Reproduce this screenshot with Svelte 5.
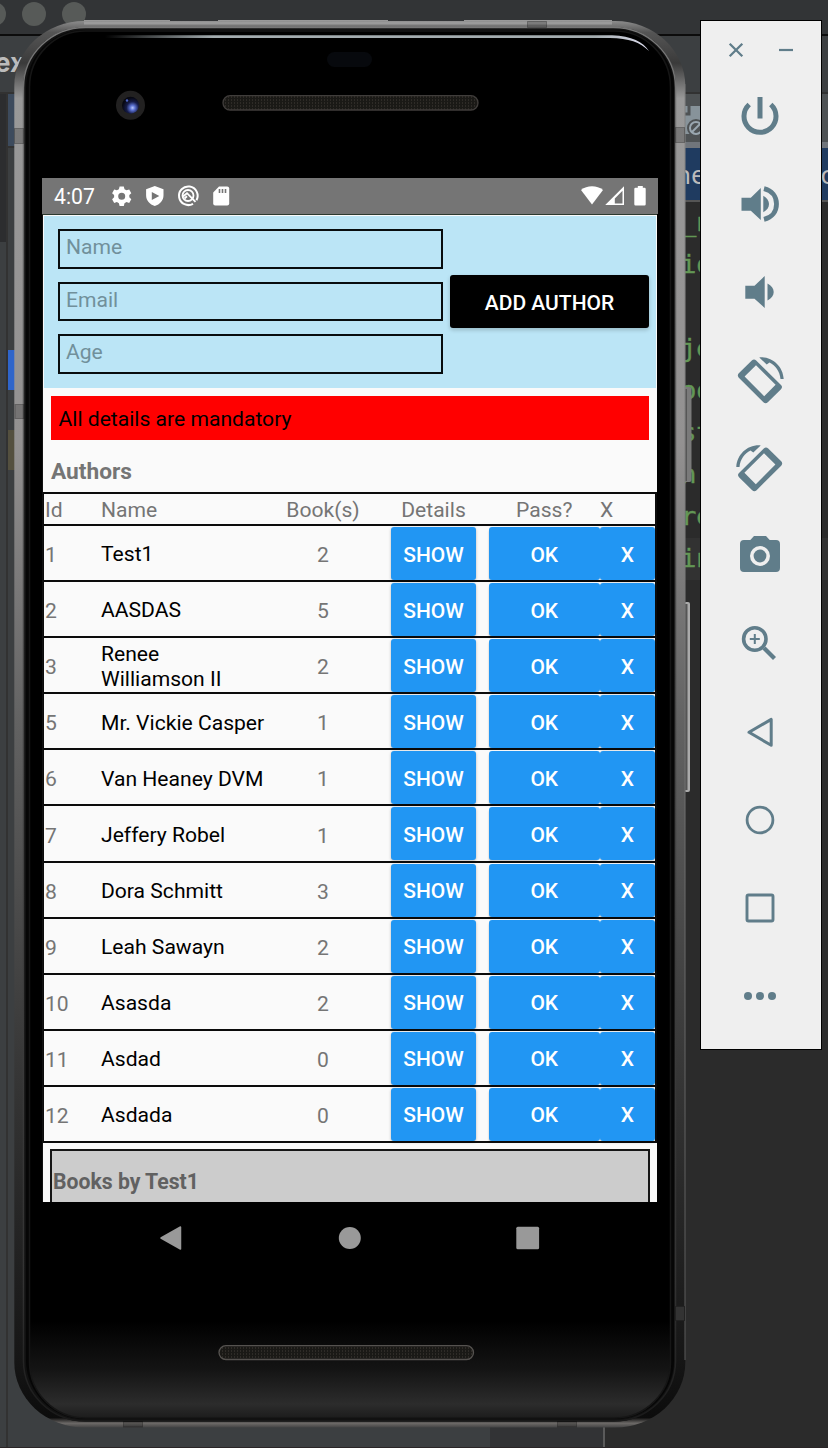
<script>
  const authors = [
    { id: 1, name: 'Test1', books: 2 },
    { id: 2, name: 'AASDAS', books: 5 },
    { id: 3, name: 'Renee Williamson II', books: 2 },
    { id: 5, name: 'Mr. Vickie Casper', books: 1 },
    { id: 6, name: 'Van Heaney DVM', books: 1 },
    { id: 7, name: 'Jeffery Robel', books: 1 },
    { id: 8, name: 'Dora Schmitt', books: 3 },
    { id: 9, name: 'Leah Sawayn', books: 2 },
    { id: 10, name: 'Asasda', books: 2 },
    { id: 11, name: 'Asdad', books: 0 },
    { id: 12, name: 'Asdada', books: 0 }
  ];
  const fields = ['Name', 'Email', 'Age'];
  const code = [
    { y: 231, t: '_n' },
    { y: 273, t: 'io' },
    { y: 357, t: 'je' },
    { y: 399, t: 'oo' },
    { y: 441, t: 'st' },
    { y: 483, t: 'n' },
    { y: 525, t: 're' },
    { y: 567, t: 'in' }
  ];
</script>

<main class="desktop">
  <svg class="ide" viewBox="0 0 828 1448" aria-hidden="true">
    <rect width="828" height="1448" fill="#3c3f41" />
    <rect width="828" height="34" fill="#323436" />
    <rect y="34" width="828" height="2" fill="#0c0c0c" />
    <circle cx="-6" cy="14" r="12" fill="#575a58" />
    <circle cx="34" cy="14" r="12" fill="#575a58" />
    <circle cx="74" cy="14" r="12" fill="#575a58" />
    <text class="title" x="-5" y="71.500">ex</text>
    <rect y="92" width="828" height="2" fill="#323232" />
    <rect y="94" width="6" height="148" fill="#2c2d2f" />
    <rect x="6" y="92" width="2" height="1356" fill="#323232" />
    <rect x="8" y="94" width="10" height="52" fill="#3d4b5d" />
    <rect x="8" y="146" width="10" height="2" fill="#323232" />
    <rect x="8" y="350" width="10" height="40" fill="#2f65ca" />
    <rect x="8" y="430" width="10" height="40" fill="#54503f" />
    <rect x="600" y="94" width="228" height="48" fill="#4e5254" />
    <rect x="680" y="106" width="20" height="28" fill="#87939a" />
    <path d="M680 114h9v-8" fill="none" stroke="#4e5254" stroke-width="3" />
    <circle cx="696" cy="128" r="9" fill="#4e5254" />
    <circle cx="696" cy="128" r="6" fill="none" stroke="#9aa7b0" stroke-width="2" />
    <path d="M692 132l8-8" stroke="#9aa7b0" stroke-width="2" />
    <rect x="600" y="142" width="228" height="6" fill="#70757b" />
    <rect x="600" y="148" width="228" height="52" fill="#1f3b60" />
    <rect x="600" y="200" width="228" height="2" fill="#555" />
    <text class="tab" x="675" y="184">ne</text>
    <text class="tab" x="820.500" y="184">c</text>
    <rect x="600" y="202" width="228" height="1246" fill="#2b2b2b" />
    <rect x="600" y="538" width="228" height="42" fill="#323232" />
    {#each code as line}
      <text class="code" x="681" y={line.y}>{line.t}</text>
    {/each}
    <rect x="490" y="1420" width="113" height="28" fill="#323335" />
    <rect x="603" y="1420" width="2" height="28" fill="#5a5a5a" />
    <rect y="1447" width="828" height="1" fill="#2a2527" />
  </svg>

  <section class="phone">
    <svg class="shell" viewBox="0 0 700 1448" aria-hidden="true">
      <defs>
        <linearGradient id="rim" x1="0" y1="0" x2="0" y2="1">
          <stop offset="0" stop-color="#8c8c8c" />
          <stop offset="0.008" stop-color="#555" />
          <stop offset="0.03" stop-color="#3a3a3a" />
          <stop offset="0.055" stop-color="#999" />
          <stop offset="0.3" stop-color="#939191" />
          <stop offset="0.5" stop-color="#626262" />
          <stop offset="0.75" stop-color="#363636" />
          <stop offset="0.95" stop-color="#161616" />
          <stop offset="0.993" stop-color="#0c0c0c" />
          <stop offset="0.997" stop-color="#6c6967" />
          <stop offset="1" stop-color="#444" />
        </linearGradient>
        <linearGradient id="rimIn" x1="0" y1="0" x2="0" y2="1">
          <stop offset="0" stop-color="#777" />
          <stop offset="0.4" stop-color="#4a4a4a" />
          <stop offset="0.9" stop-color="#333" />
          <stop offset="1" stop-color="#1a1a1a" />
        </linearGradient>
        <linearGradient id="glass" x1="0" y1="0" x2="0" y2="1">
          <stop offset="0" stop-color="#000" />
          <stop offset="0.93" stop-color="#000" />
          <stop offset="0.965" stop-color="#141414" />
          <stop offset="0.99" stop-color="#2c2c2c" />
          <stop offset="1" stop-color="#1c1c1c" />
        </linearGradient>
        <linearGradient id="shine" x1="0" x2="1">
          <stop offset="0" stop-color="#aab3b6" stop-opacity="0" />
          <stop offset="0.2" stop-color="#a4adb0" />
          <stop offset="0.9" stop-color="#a4adb0" />
          <stop offset="1" stop-color="#dde" />
        </linearGradient>
        <radialGradient id="lens" cx="0.62" cy="0.65" r="0.6">
          <stop offset="0" stop-color="#b9c9ff" />
          <stop offset="0.25" stop-color="#5a70d0" />
          <stop offset="0.6" stop-color="#161c48" />
          <stop offset="1" stop-color="#070812" />
        </radialGradient>
        <pattern id="mesh" width="3" height="3" patternUnits="userSpaceOnUse">
          <rect width="3" height="3" fill="#1a1916" />
          <rect width="1" height="2" fill="#2e2b27" />
        </pattern>
      </defs>
      <rect x="684" y="387" width="7.500" height="95" rx="2" fill="#7a7a7a" />
      <path d="M686 389v92" stroke="#4b4b4b" stroke-width="1.500" />
      <rect x="684" y="602" width="6" height="190" rx="2" fill="#aaa" />
      <path d="M686 604v186" stroke="#555" stroke-width="3" />
      <rect x="14.300" y="21" width="671" height="1406.500" rx="70" ry="65" fill="url(#rim)" />
      <path d="M84 20.500h86M218 20.500h170M464 20.500h148" stroke="#999" />
      <path d="M84 23h528" stroke="#9a9a9a" stroke-width="3" />
      <path d="M685 84V1360" stroke="#777" stroke-opacity=".7" />
      <rect x="23" y="27" width="653" height="1394.500" rx="62" ry="60" fill="#111" />
      <rect x="23.500" y="27.500" width="652" height="1393.500" rx="62" ry="60" fill="none" stroke="url(#rimIn)" stroke-width="1.500" />
      <rect x="26" y="30" width="648" height="1389" rx="59" fill="#060606" />
      <rect x="29.500" y="31" width="641" height="1387" rx="56" fill="url(#glass)" stroke="#161616" stroke-width="1.500" />
      <path d="M105 35.300H612C632 36 643 42 649 51C640 42 629 38.500 610 38H105z" fill="url(#shine)" />
      <g fill="#000" fill-opacity=".2" stroke="#000" stroke-opacity=".25">
        <rect x="14.500" y="128.500" width="9" height="15" />
        <rect x="15" y="404.500" width="9" height="14" />
        <rect x="675.500" y="127.500" width="9" height="15" />
        <rect x="527.500" y="21.500" width="19" height="6" />
        <rect x="123.500" y="1421.500" width="19" height="5.500" />
        <rect x="557.500" y="1421.500" width="19" height="5.500" />
      </g>
      <rect x="675.500" y="1306.500" width="9" height="14" fill="#333" stroke="#222" />
      <rect x="327" y="52" width="45" height="15" rx="7.500" fill="#07090d" />
      <circle cx="130.500" cy="105.300" r="14.500" fill="#222121" />
      <circle cx="130.500" cy="105.300" r="8.500" fill="url(#lens)" />
      <circle cx="127" cy="100.500" r="1.200" fill="#4e66c8" />
      <rect x="223" y="95.700" width="255" height="14.300" rx="7.100" fill="url(#mesh)" stroke="#403d3b" stroke-width="1.300" />
      <rect x="219" y="1345.700" width="254.500" height="13.800" rx="6.900" fill="url(#mesh)" stroke="#55524f" stroke-width="1.300" />
    </svg>

    <div class="screen">
      <header class="status">
        <span class="clock">4:07</span>
        <svg class="notes" viewBox="0 0 120 24">
          <path fill="#fff" fill-rule="evenodd" d="M7.600 2.500h4.200l.7 2.700 2 1.100 2.700-.8 2.100 3.700-2 1.900v2.200l2 1.900-2.100 3.700-2.700-.8-2 1.100-.7 2.700H7.600l-.7-2.700-2-1.100-2.700.8L.1 15.200l2-1.900v-2.200l-2-1.900 2.100-3.700 2.700.8 2-1.100zM9.700 8.700a3.500 3.500 0 1 0 0 7 3.500 3.500 0 1 0 0-7z" />
          <path fill="#fff" fill-rule="evenodd" d="M42.800 2l8.700 3.200v6c0 5.300-3.700 9.100-8.700 10.800-5-1.700-8.700-5.500-8.700-10.800v-6zM39.800 8v8l7.500-4z" />
          <path d="M84.500 16.200A9.300 9.300 0 1 0 81 19.800" fill="none" stroke="#fff" stroke-width="2" />
          <circle cx="76" cy="11.500" r="5.500" fill="none" stroke="#fff" stroke-width="1.800" />
          <path d="M71 12.500l4-3.300 8.500 8.600M72.500 14.500l2.500-2.300" fill="none" stroke="#fff" stroke-width="1.900" />
          <path fill="#fff" d="M107 2.500h8.200a2 2 0 0 1 2 2v15a2 2 0 0 1-2 2h-12a2 2 0 0 1-2-2V8.500z" />
          <path d="M107.500 5v4M110.500 5v4M113.500 5v4" stroke="#757575" stroke-width="1.600" />
        </svg>
        <svg class="signals" viewBox="0 0 68 24">
          <path fill="#fff" d="M1 6C7 1 17 1 23 6L12 20.500z" />
          <path fill="#fff" fill-rule="evenodd" d="M44 2.300V21H25.200zM42.500 6.800l-7.700 7.600v5.100h7.700z" />
          <path fill="#fff" d="M57.800 2h5v1.800h1.700a1.200 1.200 0 0 1 1.200 1.200v15.200a1.200 1.200 0 0 1-1.200 1.200h-9a1.200 1.200 0 0 1-1.200-1.200V5a1.200 1.200 0 0 1 1.200-1.200h2.300z" />
        </svg>
      </header>

      <div class="app">
        <form class="entry">
          <div class="fields">
            {#each fields as f}
              <div class="field">{f}</div>
            {/each}
          </div>
          <button type="button" class="add">ADD AUTHOR</button>
        </form>
        <p class="alert">All details are mandatory</p>
        <h2>Authors</h2>
        <div class="table">
          <div class="row head">
            <span>Id</span><span>Name</span><span class="mid">Book(s)</span><span></span>
            <span class="mid">Details</span><span></span><span class="mid">Pass?</span><span>X</span>
          </div>
          {#each authors as a}
            <div class="row">
              <span>{a.id}</span><span class="name">{a.name}</span><span class="mid">{a.books}</span><span></span>
              <button type="button">SHOW</button><span></span>
              <button type="button" class="ok">OK</button><button type="button">X</button>
            </div>
          {/each}
        </div>
        <div class="books">Books by Test1</div>
      </div>
    </div>

    <nav class="keys">
      <svg viewBox="0 0 24 26"><path d="M2 13L21.500 2V24z" fill="#999" stroke="#999" stroke-linejoin="round" stroke-width="1.500" /></svg>
      <svg viewBox="0 0 24 26"><circle cx="12.800" cy="13" r="11" fill="#999" /></svg>
      <svg viewBox="0 0 24 26"><rect x=".3" y="1.700" width="22.800" height="22.600" rx="1.500" fill="#999" /></svg>
    </nav>
  </section>

  <aside class="tools">
    <div class="win">
      <svg viewBox="0 0 16 16"><path d="M1.700 1.700l12.600 12.600M14.300 1.700L1.700 14.300" stroke-width="2.300" /></svg>
      <svg viewBox="0 0 16 16"><path d="M1 8h14" stroke-width="2.200" /></svg>
    </div>
    <svg viewBox="0 0 48 48"><path d="M13.200 12.500A16 16 0 1 0 34.800 12.500M24 5v21.500" stroke-width="5" /></svg>
    <svg viewBox="0 0 48 48"><path class="f" d="M5.500 17.700h9.300L24.800 8v32L14.800 30.700H5.500zM27.300 15.700c3.700 2 5.700 5 5.700 8.300s-2 6.300-5.700 8.300z" /><path d="M28 8.600C36 10.500 40.500 16.500 40.500 24S36 37.500 28 39.400" stroke-width="4.800" /></svg>
    <svg viewBox="0 0 48 48"><path class="f" d="M9.300 17.700h9.200L28.700 8v32L18.500 30.700H9.300zM31.500 15.500c4 2 6.200 5 6.200 8.500s-2.200 6.500-6.200 8.500z" /></svg>
    <svg viewBox="0 0 48 48"><g id="rot"><path class="f" fill-rule="evenodd" d="M15.800 4.400q2.200-2 4.400 0L45 29q2 2 0 4.200L31.800 46.200q-2.200 2-4.400 0L2.800 21.700q-2-2.200 0-4.400zM20 9.200L8.600 20.400 28.200 40.200 39.600 28.800z" /><path class="f" d="M23.300 1.400C36.500.4 47 10.500 47.700 23h-3.200C43.800 15.300 39.500 9.300 33.500 6.500L30.700 8.600z" /></g></svg>
    <svg viewBox="0 0 48 48"><use href="#rot" transform="matrix(-1 0 0 1 48 0)" /></svg>
    <svg viewBox="0 0 48 48"><path class="f" fill-rule="evenodd" d="M18 4h12l3.700 4H40a4 4 0 0 1 4 4v24a4 4 0 0 1-4 4H8a4 4 0 0 1-4-4V12a4 4 0 0 1 4-4h6.300zM24 14a10 10 0 1 0 0 20 10 10 0 1 0 0-20z" /><circle class="f" cx="24" cy="24" r="6.400" /></svg>
    <svg viewBox="0 0 48 48"><circle cx="18.800" cy="19" r="11.200" stroke-width="3.600" /><path d="M18.800 14v10M13.800 19h10" stroke-width="2" /><path d="M28 28l10.500 10.500" stroke-width="4.200" /></svg>
    <svg viewBox="0 0 48 48"><path d="M13 24.300L35.200 11.400V37.300z" stroke-width="3" stroke-linejoin="round" /></svg>
    <svg viewBox="0 0 48 48"><circle cx="24" cy="24" r="12.900" stroke-width="2.800" /></svg>
    <svg viewBox="0 0 48 48"><rect x="11" y="11" width="26" height="26" rx="1.500" stroke-width="2.900" /></svg>
    <svg viewBox="0 0 48 48"><g class="f"><circle cx="12" cy="24" r="4" /><circle cx="24" cy="24" r="4" /><circle cx="36" cy="24" r="4" /></g></svg>
  </aside>
</main>

<style>
  :global(body) { margin: 0; overflow: hidden; }
  .desktop { position: relative; width: 828px; height: 1448px; overflow: hidden; font-family: Roboto, sans-serif; background: #2b2b2b; }
  .desktop * { box-sizing: border-box; }
  svg { display: block; }
  .ide { width: 828px; height: 1448px; }
  .title { font: 700 26px Inter, sans-serif; fill: #bbb; }
  .tab { font: 26px "Noto Sans", sans-serif; fill: #bbb; }
  .code { font: 25.500px "DejaVu Sans Mono", monospace; fill: #629755; stroke: #629755; stroke-width: .4px; }
  .phone { position: absolute; left: 0; top: 0; width: 700px; height: 1448px; padding: 178px 0 0 42px; }
  .shell { position: absolute; left: 0; top: 0; width: 700px; height: 1448px; }
  .screen { position: relative; width: 616px; height: 1024px; overflow: hidden; display: flex; flex-direction: column; }
  .status { height: 36px; flex: none; background: #757575; display: flex; align-items: center; padding: 0 10px 0 12px; color: #fff; }
  .clock { font-size: 21.200px; width: 58px; line-height: 36px; padding-top: 1.500px; }
  .notes { width: 120px; height: 24px; }
  .signals { width: 68px; height: 24px; margin-left: auto; }
  .app { flex: 1; min-height: 0; background: #fafafa; border-top: 1px solid #2c3a30; margin: 0 1px 0 0; border-left: 1px solid #111; font-size: 21.100px; color: #757575; overflow: hidden; }
  .entry { margin: 1px 1px 0; height: 172px; background: #bbe5f6; display: flex; align-items: center; padding: 0 7px 0 13.500px; gap: 7px; }
  .fields { flex: none; width: 385.500px; display: flex; flex-direction: column; gap: 13px; padding-bottom: 1px; }
  .field { height: 39.500px; border: 2px solid #080c0e; padding: 0 6.500px; line-height: 32px; color: #71909b; }
  button { font: 500 21px Roboto, sans-serif; color: #fff; border: 0; margin: 0; padding: 2px 0 0; border-radius: 3px; }
  .add { flex: 1; height: 53px; background: #000; box-shadow: 0 2px 4px #0003; margin-top: -1.200px; padding-top: 3px; }
  .alert { margin: 7.500px 8px 0; height: 44px; line-height: 45px; background: #f00; color: #000; padding-left: 7.500px; }
  h2 { margin: 0; padding: 7.500px 0 0 8px; height: 52.500px; line-height: 49px; font-size: 22.700px; font-weight: 700; }
  .table { border: 2px solid #0b0b0b; border-width: 2px 2px 0 1px; }
  .row { height: 56.100px; display: grid; grid-template-columns: 56px 173px 98px 19px 85px 12.500px 111.500px 55px; align-items: center; padding: 1px 0 0 1px; border-bottom: 2px solid #0b0b0b; }
  .row span { padding-top: 2px; }
  .row.head { height: 32px; padding-top: 1px; }
  .row.head span { padding-top: 0; }
  .row .name { color: #000; line-height: 24.500px; padding-right: 6px; }
  .mid { text-align: center; }
  .row button { height: 53px; align-self: start; background: #2196f3; box-shadow: 0 1px 3px #0004; }
  .row .ok { position: relative; z-index: 1; box-shadow: -1px 2px 2px -1px #0004; }
  .books { margin: 5.500px 7px 0; height: 80px; border: 2px solid #151515; background: #ccc; font-weight: 700; font-size: 21.200px; color: #616161; padding: 18px 0 0 1px; line-height: 25px; }
  .keys { position: relative; width: 616px; height: 71px; display: flex; align-items: center; justify-content: space-between; padding: 0 118.500px 0 117px; }
  .keys svg { width: 24px; height: 26px; }
  .tools { position: absolute; left: 700px; top: 20px; width: 122px; height: 1030px; background: #efefef; border: 1px solid #000; display: flex; flex-direction: column; align-items: center; gap: 40px; }
  .tools svg { width: 48px; height: 48px; flex: none; fill: none; stroke: #607d8a; overflow: visible; margin-right: 2px; }
  .tools .f { fill: #607d8a; stroke: none; }
  .tools .win { width: 100%; height: 50px; flex: none; margin-bottom: -19px; padding: 21px 27px 0 27px; display: flex; justify-content: space-between; }
  .tools .win svg { width: 16px; height: 16px; margin: 0; }
</style>
